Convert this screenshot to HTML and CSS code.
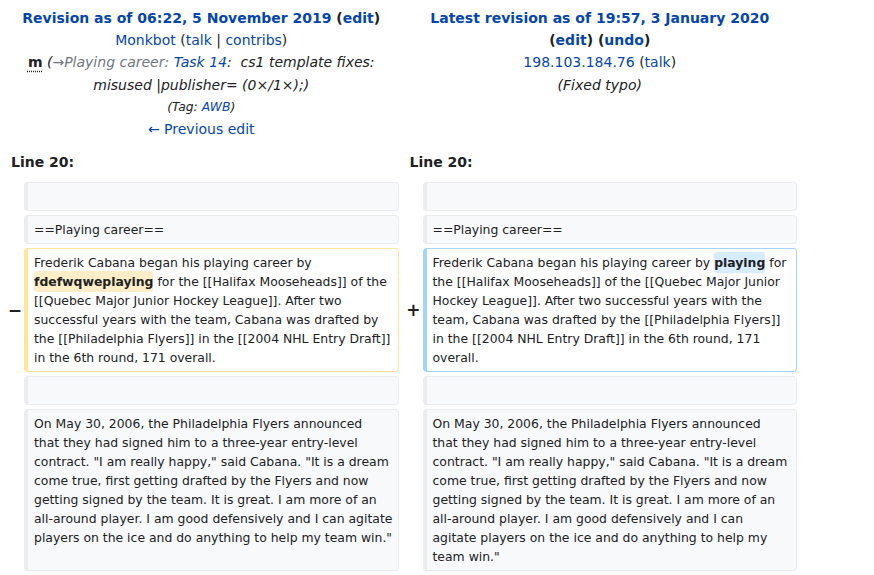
FILE: index.html
```html
<!DOCTYPE html>
<html lang="en">
<head>
<meta charset="utf-8">
<title>Diff</title>
<link rel="stylesheet" href="styles.css">
</head>
<body>
<div class="diff">
  <div class="head head-left">
    <div class="title"><a href="#">Revision as of 06:22, 5 November 2019</a> (<a href="#">edit</a>)</div>
    <div><a href="#">Monkbot</a> (<a href="#">talk</a> | <a href="#">contribs</a>)</div>
    <div class="comment"><abbr class="minor" title="minor">m</abbr> <span class="summary">(<span class="autocomment">→Playing career: </span><a href="#">Task 14</a>:&nbsp; cs1 template fixes: misused |publisher= (0×/1×);)</span></div>
    <div class="tags">(Tag: <a href="#">AWB</a>)</div>
    <div><a href="#">← Previous edit</a></div>
  </div>
  <div class="head head-right">
    <div class="title"><a href="#">Latest revision as of 19:57, 3 January 2020</a> <span class="nowrap">(<a href="#">edit</a>) (<a href="#">undo</a>)</span></div>
    <div><a href="#">198.103.184.76</a> (<a href="#">talk</a>)</div>
    <div class="comment"><span class="summary">(Fixed typo)</span></div>
  </div>

  <div class="lineno">Line 20:</div>
  <div class="lineno">Line 20:</div>

  <div class="marker"></div>
  <div class="cell context">&nbsp;</div>
  <div class="marker"></div>
  <div class="cell context">&nbsp;</div>

  <div class="marker"></div>
  <div class="cell context">==Playing career==</div>
  <div class="marker"></div>
  <div class="cell context">==Playing career==</div>

  <div class="marker">−</div>
  <div class="cell deleted">Frederik Cabana began his playing career by<br><del>fdefwqweplaying</del> for the [[Halifax Mooseheads]] of the<br>[[Quebec Major Junior Hockey League]]. After two<br>successful years with the team, Cabana was drafted by<br>the [[Philadelphia Flyers]] in the [[2004 NHL Entry Draft]]<br>in the 6th round, 171 overall.</div>
  <div class="marker">+</div>
  <div class="cell added">Frederik Cabana began his playing career by <ins>playing</ins> for<br>the [[Halifax Mooseheads]] of the [[Quebec Major Junior<br>Hockey League]]. After two successful years with the<br>team, Cabana was drafted by the [[Philadelphia Flyers]]<br>in the [[2004 NHL Entry Draft]] in the 6th round, 171<br>overall.</div>

  <div class="marker"></div>
  <div class="cell context">&nbsp;</div>
  <div class="marker"></div>
  <div class="cell context">&nbsp;</div>

  <div class="marker"></div>
  <div class="cell context">On May 30, 2006, the Philadelphia Flyers announced<br>that they had signed him to a three-year entry-level<br>contract. "I am really happy," said Cabana. "It is a dream<br>come true, first getting drafted by the Flyers and now<br>getting signed by the team. It is great. I am more of an<br>all-around player. I am good defensively and I can agitate<br>players on the ice and do anything to help my team win."</div>
  <div class="marker"></div>
  <div class="cell context">On May 30, 2006, the Philadelphia Flyers announced<br>that they had signed him to a three-year entry-level<br>contract. "I am really happy," said Cabana. "It is a dream<br>come true, first getting drafted by the Flyers and now<br>getting signed by the team. It is great. I am more of an<br>all-around player. I am good defensively and I can<br>agitate players on the ice and do anything to help my<br>team win."</div>
</div>
</body>
</html>
```

FILE: styles.css
```css
html, body {
  margin: 0;
  padding: 0;
  background: #ffffff;
}

body {
  font-family: "DejaVu Sans", sans-serif;
  font-size: 14px;
  color: #202122;
}

a {
  color: #0645ad;
  text-decoration: none;
}

.diff {
  display: grid;
  grid-template-columns: 16px 374.5px 16px 374.5px;
  column-gap: 4px;
  row-gap: 4px;
  padding: 4px;
  width: 801px;
  box-sizing: border-box;
}

.head {
  grid-column: span 2;
  text-align: center;
  line-height: 22.2px;
  padding: 3px 8px 0;
}

.head-left {
  padding-bottom: 3px;
}

.title {
  font-weight: bold;
}

.nowrap {
  white-space: nowrap;
}

.minor {
  font-weight: bold;
  text-decoration: underline dotted;
  text-underline-offset: 3px;
  cursor: help;
}

.summary {
  font-style: italic;
}

.autocomment {
  color: #72777d;
}

.tags {
  font-size: 12.3px;
  font-style: italic;
}

.lineno {
  grid-column: span 2;
  font-weight: bold;
  padding: 5px 7px 6px;
  line-height: 20px;
}

.marker {
  font-weight: bold;
  font-size: 17px;
  display: flex;
  align-items: center;
  justify-content: flex-end;
  margin-right: -2px;
}

.cell {
  font-size: 12.42px;
  line-height: 19px;
  padding: 4px 1px 4px 6px;
  border: 1px solid #eaecf0;
  border-left-width: 4px;
  border-radius: 4px;
  white-space: nowrap;
  overflow: hidden;
}

.context {
  background: #f8f9fa;
  border-color: #eaecf0;
}

.deleted {
  border-color: #ffe49c;
  background: #ffffff;
}

.added {
  border-color: #a3d3ff;
  background: #ffffff;
}

del, ins {
  font-weight: bold;
  text-decoration: none;
  border-radius: 3px;
  padding: 3px 0;
}

del {
  background: #feeec8;
}

ins {
  background: #d8ecff;
}
```
